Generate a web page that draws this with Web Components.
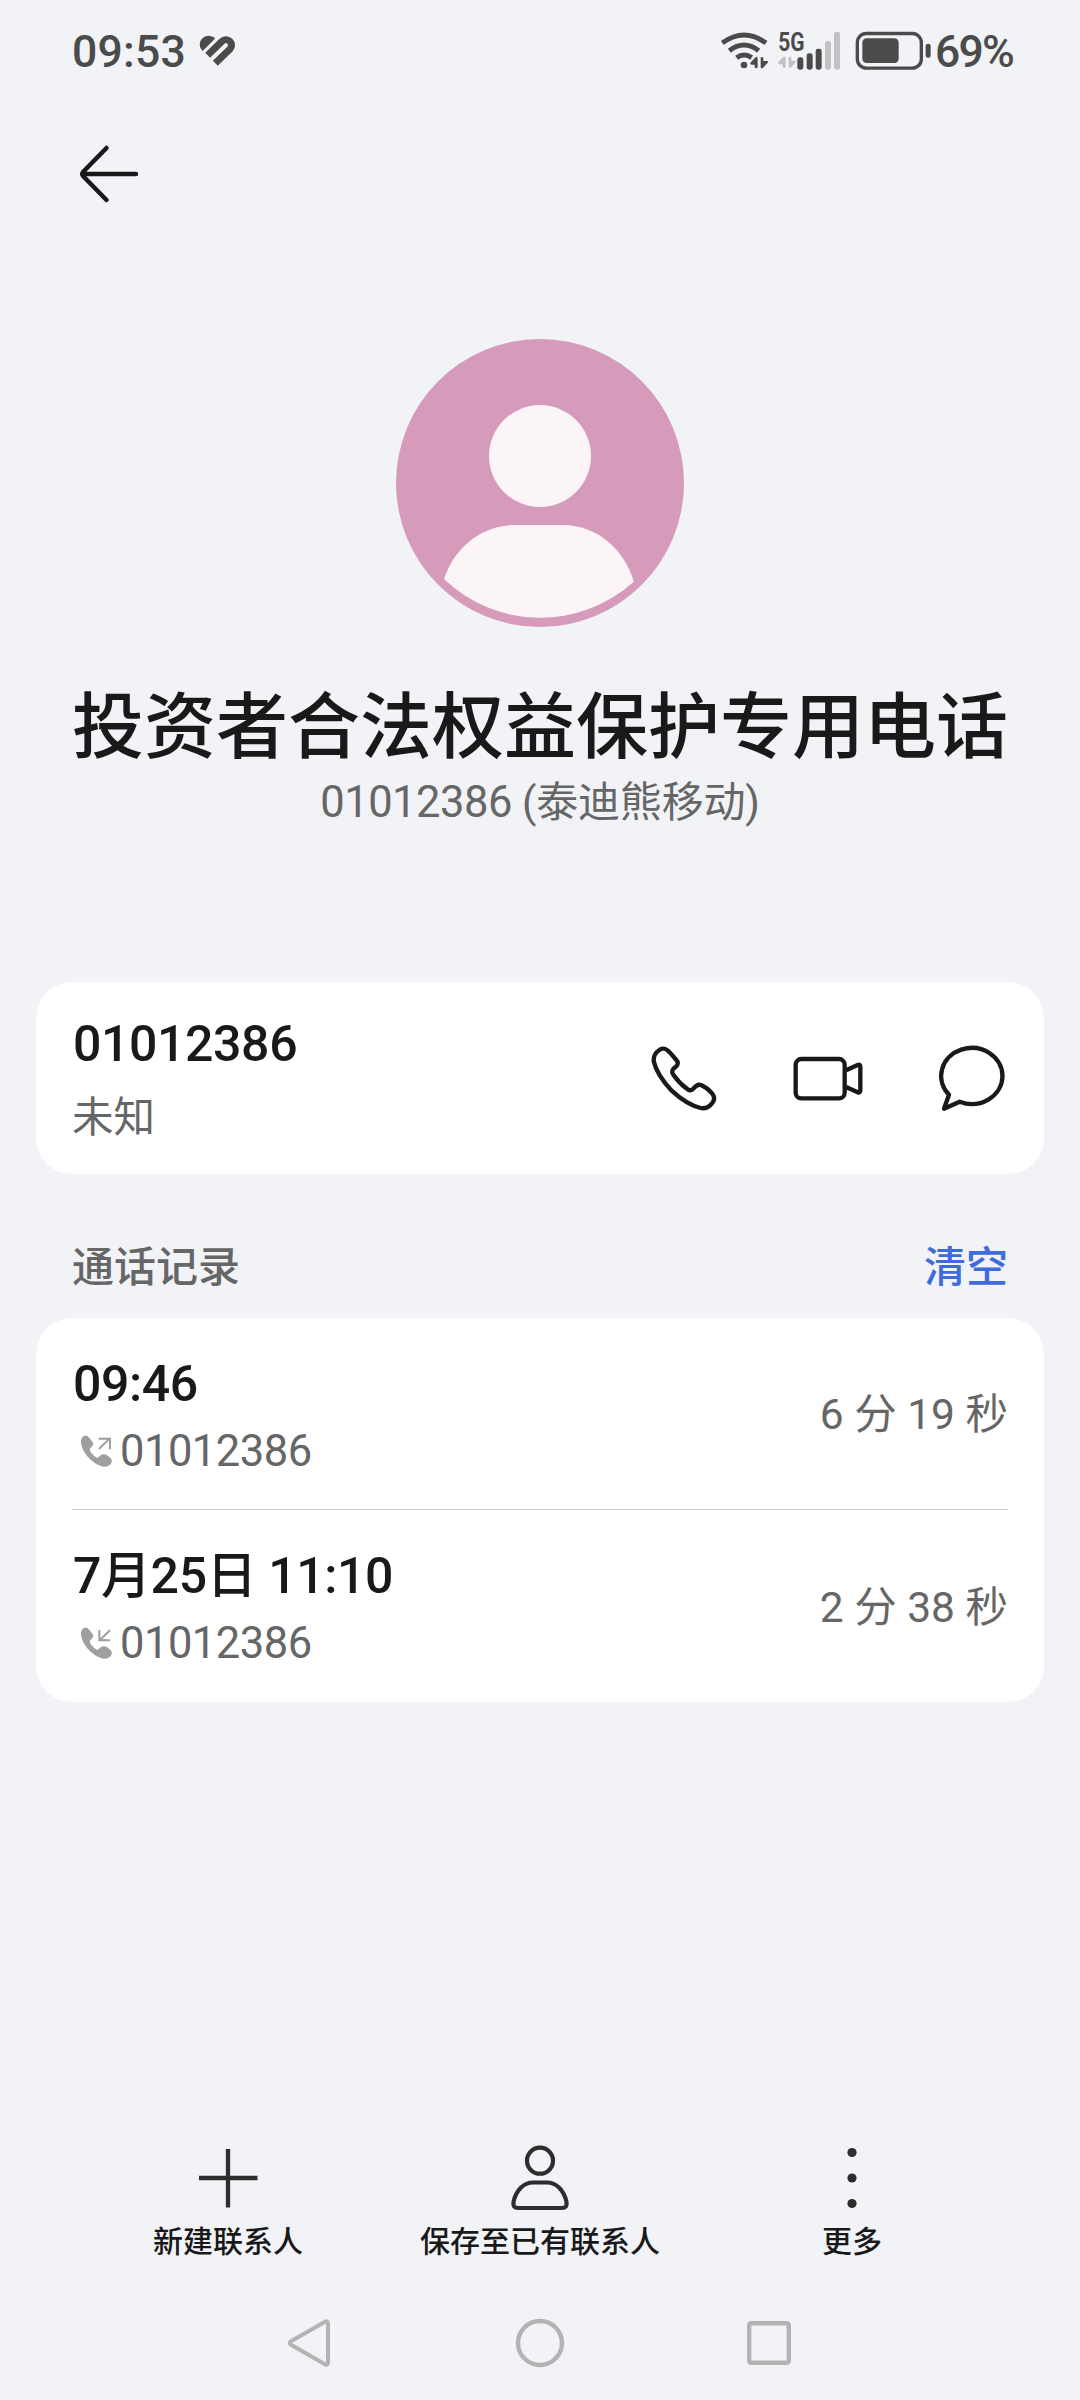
<!DOCTYPE html>
<html lang="zh-CN">
<head>
<meta charset="utf-8">
<title>联系人详情</title>
<style>
html,body{margin:0;padding:0;background:#f1f3f7}
body{width:1080px;height:2400px;overflow:hidden;color:#191919;font-family:Roboto,"Noto Sans CJK SC",sans-serif}
</style>
</head>
<body>
<contact-page></contact-page>
<script>
const define = (name, css, html) => customElements.define(name, class extends HTMLElement {
  constructor() {
    super();
    this.attachShadow({ mode: 'open' }).innerHTML =
      `<style>*{box-sizing:border-box}svg{display:block;flex:none;overflow:visible}${css}</style>` +
      (typeof html === 'function' ? html(this) : html);
  }
});

const phoneShape = 'M183 660Q182 648 192 642Q200 638 208 648L218 660Q223 668 214 675Q205 682 214 693Q224 705 232 708Q240 700 248 697Q258 694 272 709Q280 718 270 728Q260 737 245 733Q222 725 203 704Q184 682 183 660Z';
const up = 'M151 157L165 142Q173 136 173 145V170Q173 174 169 174Q164 174 164 170V163H154Q149 162 151 157Z';
const down = 'M182 144Q182 140 186 140Q190 140 190 144V152H201Q206 153 203 157L191 171Q183 178 182 170Z';
const icons = {
  heart: ['478 73 114 98', 38, 32.67, '<path fill="#4b4b4b" d="M527 86Q513 75 498 80Q480 88 480 106Q481 117 489 124Z"/><path fill="none" stroke="#4b4b4b" stroke-width="21" d="M504 137L547 95A16.5 16.5 0 0 1 571 118L527 161"/>'],
  wifi: ['60 59 150 123', 50, 41, `<g fill="none" stroke="#4b4b4b" stroke-width="15"><path d="M67 98Q132 50 198 98"/><path d="M88 121Q132 87 176 121"/><path d="M110 142Q132 126 155 142"/></g><circle cx="132" cy="164" r="10" fill="#4b4b4b"/><g fill="#4b4b4b"><path d="${up}"/><path d="${down}"/></g>`],
  cell: ['231 39 195 163', 65, 54.33, `<text x="235" y="122" font-family="Roboto" font-weight="700" font-size="76" textLength="79" lengthAdjust="spacingAndGlyphs" fill="#4b4b4b">5G</text><g fill="#c1c2c4" transform="translate(84 0)"><path d="${up}"/><path d="${down}"/></g><g fill="#4b4b4b"><rect x="292" y="142" width="18" height="37" rx="7"/><rect x="320" y="130" width="18" height="49" rx="7"/><rect x="347" y="116" width="18" height="63" rx="7"/></g><g fill="#c1c2c4"><rect x="375" y="93" width="18" height="86" rx="7"/><rect x="402" y="65" width="18" height="114" rx="7"/></g>`],
  battery: ['465 59 230 123', 76.67, 41, '<rect x="472" y="69.5" width="192" height="104" rx="27" fill="none" stroke="#4b4b4b" stroke-width="10"/><rect x="487" y="84" width="109" height="74" rx="13" fill="#4b4b4b"/><rect x="677" y="100" width="15" height="42" rx="7.5" fill="#4b4b4b"/>'],
  back: ['72 138 72 72', 72, 72, '<path d="M136 174H84M106.5 148L83 172Q81.500 174 83 176L106.500 200" fill="none" stroke="#191919" stroke-width="4.500" stroke-linecap="round" stroke-linejoin="round"/>'],
  phone: ['90 124 204 216', 68, 72, '<path fill="none" stroke="#191919" stroke-width="13" d="M130 144Q137 143 150 156L169 178Q178 187 168 198Q150 209 160 222Q178 248 203 266Q212 272 220 264Q232 249 243 253Q262 261 277 279Q288 294 276 308Q262 326 242 322Q200 312 155 270Q110 222 101 181Q100 160 118 148Q124 143 130 144Z"/>'],
  video: ['516 124 216 216', 72, 72, '<g fill="none" stroke="#191919" stroke-width="13" stroke-linejoin="round"><rect x="527" y="175" width="147" height="118" rx="17"/><path d="M678 209L713 193Q721 190 721 198V269Q721 277 713 275L678 259"/></g>'],
  message: ['948 124 216 216', 72, 72, '<path fill="none" stroke="#191919" stroke-width="13" stroke-linejoin="round" d="M987 282A92 84 0 1 1 1019 303L972 324Z"/>'],
  out: ['180 636 96 102', 32, 34, `<path fill="#9f9f9f" d="${phoneShape}"/><path fill="none" stroke="#9f9f9f" stroke-width="6" d="M237 681L269 649M236 650H270V682"/>`],
  in: ['180 636 96 102', 32, 34, `<path fill="#9f9f9f" d="${phoneShape}"/><path fill="none" stroke="#9f9f9f" stroke-width="6" d="M270 649L239 679M238 648V679H270"/>`],
  plus: ['192 2142 72 72', 72, 72, '<path d="M199 2178H257.500M228 2149V2207.500" stroke="#2d2d2d" stroke-width="4.300"/>'],
  person: ['504 2142 72 72', 72, 72, '<g fill="none" stroke="#2d2d2d" stroke-width="4.200"><circle cx="540" cy="2160.700" r="13"/><path d="M513.500 2202C516 2190 524 2182.500 533 2182.500H547C556 2182.500 564 2190 566.500 2202Q567.500 2208 562 2208H518Q512.500 2208 513.500 2202Z"/></g>'],
  more: ['816 2142 72 72', 72, 72, '<g fill="#2d2d2d"><circle cx="852" cy="2152.500" r="4.600"/><circle cx="852" cy="2178" r="4.600"/><circle cx="852" cy="2203.500" r="4.600"/></g>'],
  tri: ['284 2313 60 60', 60, 60, '<path d="M291 2341.200L324.500 2322Q328 2320 328 2324V2362Q328 2366 324.500 2364L291 2344.800Q288.500 2343 291 2341.200Z" fill="none" stroke="#b3b3b3" stroke-width="4"/>'],
  home: ['510 2313 60 60', 60, 60, '<circle cx="540" cy="2343" r="22" fill="none" stroke="#b3b3b3" stroke-width="4.400"/>'],
  recent: ['736 2313 60 60', 60, 60, '<rect x="749.200" y="2323.200" width="39.600" height="39.600" rx="2" fill="none" stroke="#b3b3b3" stroke-width="4.400"/>'],
};
define('ui-icon', ':host{display:block;flex:none}', el => {
  const [box, w, h, body] = icons[el.getAttribute('name')];
  return `<svg viewBox="${box}" width="${w}" height="${h}">${body}</svg>`;
});

define('status-bar', `
:host{display:flex;height:100px;padding:0 65px 0 72px;align-items:center;color:#4b4b4b;font-size:44.500px;font-weight:500}
.l,.r{display:flex;align-items:center}.l{flex:1}
.t{line-height:52px;padding-top:3px;letter-spacing:.2px}
.l ui-icon{margin-left:13px}
.cell{margin-left:7px}.bat{margin-left:13px}.p{margin-left:3px;margin-right:2px;letter-spacing:-1.800px}`,
`<div class="l"><span class="t">09:53</span><ui-icon name="heart"></ui-icon></div>
<div class="r"><ui-icon name="wifi"></ui-icon><ui-icon class="cell" name="cell"></ui-icon><ui-icon class="bat" name="battery"></ui-icon><span class="t p">69%</span></div>`);

define('app-bar', ':host{display:flex;height:148px;padding:38px 72px 0}', '<ui-icon name="back"></ui-icon>');

define('contact-hero', `
:host{display:flex;flex-direction:column;align-items:center;height:734px;padding-top:91px}
h1{margin:44px 0 0;font-family:"Noto Sans CJK SC",sans-serif;font-size:72px;font-weight:500;line-height:100px;white-space:nowrap}
.n{display:flex;align-items:center;margin-top:6px;height:52px;font-size:42px;line-height:52px;color:#666;white-space:pre}
.n b{font-weight:400;font-size:43.500px;letter-spacing:-.5px}
.n i{font-style:normal;letter-spacing:-.2px}`,
`<svg width="288" height="288" viewBox="0 0 288 288"><circle cx="144" cy="144" r="144" fill="#d69aba"/><g fill="#fbf5f8"><circle cx="144" cy="117" r="51"/><path d="M48 240C58 209 85 186 119 186H167C201 186 229 211 237.700 242.700A139 139 0 0 1 48 240Z"/></g></svg>
<h1>投资者合法权益保护专用电话</h1><div class="n"><b>01012386</b><i> (泰迪熊移动)</i></div>`);

define('white-card', ':host{display:block;margin:0 36px;background:#fff;border-radius:36px;overflow:hidden}', '<slot></slot>');

define('number-row', `
:host{display:flex;height:192px;padding:0 36px;align-items:center}
.t{flex:1;padding-top:6px}
.a{font-size:50px;font-weight:500;line-height:60px;letter-spacing:-.4px;padding-left:1px}
.b{font-size:41.500px;line-height:60px;color:#666;margin-top:14px}
.i{display:flex;gap:72px}.i :first-child{margin-right:2px}`,
`<div class="t"><div class="a"><slot></slot></div><div class="b"><slot name="kind"></slot></div></div>
<div class="i"><ui-icon name="phone"></ui-icon><ui-icon name="video"></ui-icon><ui-icon name="message"></ui-icon></div>`);

define('section-head', `
:host{display:flex;justify-content:space-between;height:144px;padding:44px 72px 0;font-size:42px;font-weight:500;line-height:100px;color:#666}
.c{color:#3f6bdc}`,
'<slot></slot><span class="c"><slot name="action"></slot></span>');

define('call-row', `
:host{display:flex;height:192px;margin:0 36px;align-items:center;justify-content:space-between}
:host([divided]){border-bottom:1px solid #c8c8c8}
.t{padding-top:4px}
.a{display:block;font-size:50px;font-weight:500;line-height:60px;letter-spacing:-.4px;padding-left:1px;white-space:pre}
.b{display:flex;align-items:center;font-size:43.500px;line-height:52px;color:#666;margin-top:12px;padding-left:8px;letter-spacing:-.5px}
.b ui-icon{margin-bottom:2px}
.b span{margin-left:8px}
.d{font-size:42.500px;color:#666;white-space:pre;line-height:60px;padding-top:3px}`,
el => `<div class="t"><span class="a"><slot></slot></span><div class="b"><ui-icon name="${el.getAttribute('dir')}"></ui-icon><span>01012386</span></div></div><div class="d"><slot name="dur"></slot></div>`);

define('tool-item', `
:host{display:flex;flex-direction:column;align-items:center;width:312px;font-size:30px;line-height:44px;font-weight:500}
span{margin-top:6px}`,
el => `<ui-icon name="${el.getAttribute('icon')}"></ui-icon><span><slot></slot></span>`);

define('tool-bar', ':host{display:flex;padding:0 72px;height:171px}', '<slot></slot>');
define('nav-bar', ':host{display:flex;justify-content:space-between;padding:0 284px;height:60px}',
'<ui-icon name="tri"></ui-icon><ui-icon name="home"></ui-icon><ui-icon name="recent"></ui-icon>');

define('contact-page', ':host{display:flex;flex-direction:column;height:2400px}.grow{flex:1}nav-bar{margin-bottom:27px}', `
<status-bar></status-bar><app-bar></app-bar><contact-hero></contact-hero>
<white-card><number-row>01012386<span slot="kind">未知</span></number-row></white-card>
<section-head>通话记录<span slot="action">清空</span></section-head>
<white-card>
<call-row divided dir="out">09:46<span slot="dur">6 分 19 秒</span></call-row>
<call-row dir="in">7月25日 11:10<span slot="dur">2 分 38 秒</span></call-row>
</white-card>
<div class="grow"></div>
<tool-bar><tool-item icon="plus">新建联系人</tool-item><tool-item icon="person">保存至已有联系人</tool-item><tool-item icon="more">更多</tool-item></tool-bar>
<nav-bar></nav-bar>`);
</script>
</body>
</html>
